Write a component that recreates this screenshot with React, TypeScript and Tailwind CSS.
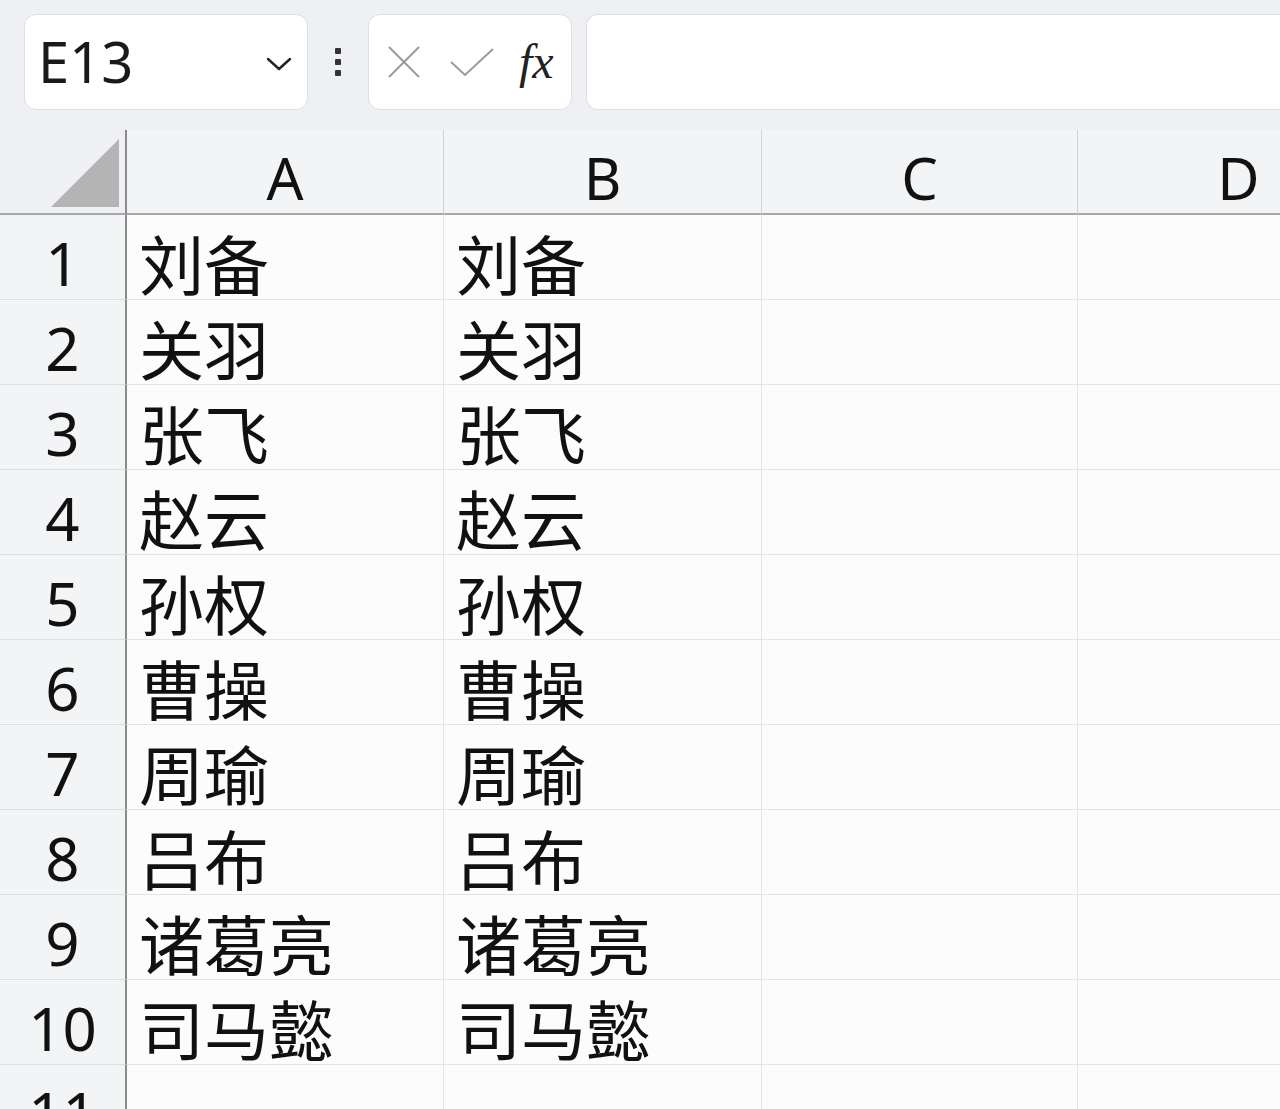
import React from 'react';

const names = ['刘备', '关羽', '张飞', '赵云', '孙权', '曹操', '周瑜', '吕布', '诸葛亮', '司马懿'];
const cols = ['A', 'B', 'C', 'D'];

const cjk = { fontFamily: '"Noto Sans CJK SC", "Noto Sans", sans-serif' };
const latin = { fontFamily: '"Noto Sans", "Open Sans", sans-serif' };

function FormulaBar() {
    return (
        <div className="flex h-[130px] items-start bg-[#eef0f3] pt-[14px] pl-[24px]">
            <div className="flex h-[96px] w-[284px] items-center justify-between rounded-[12px] border border-[#dcdfe3] bg-white pl-[13px] pr-[14px]">
                <span className="text-[56px] leading-[1.1] text-[#1a1a1a]" style={latin}>E13</span>
                <svg width="28" height="16" viewBox="0 0 28 16" className="mt-[4px]">
                    <path d="M3 3 L14 13 L25 3" fill="none" stroke="#222" strokeWidth="2.4" strokeLinecap="round" strokeLinejoin="round" />
                </svg>
            </div>
            <div className="flex h-[96px] w-[60px] flex-col items-center justify-center gap-[5px]">
                <span className="h-[6px] w-[6px] rounded-[1px] bg-[#333]" />
                <span className="h-[6px] w-[6px] rounded-[1px] bg-[#333]" />
                <span className="h-[6px] w-[6px] rounded-[1px] bg-[#333]" />
            </div>
            <div className="flex h-[96px] w-[204px] items-center rounded-[12px] border border-[#dcdfe3] bg-white pl-[18px]">
                <svg width="34" height="34" viewBox="0 0 34 34">
                    <path d="M2 2 L32 32 M32 2 L2 32" stroke="#9a9a9a" strokeWidth="2" />
                </svg>
                <svg width="46" height="30" viewBox="0 0 46 30" className="ml-[28px]">
                    <path d="M2 15 L16 28 L44 2" fill="none" stroke="#9a9a9a" strokeWidth="2" />
                </svg>
                <span
                    className="ml-[24px] text-[48px] italic leading-[1.1] text-[#222]"
                    style={{ fontFamily: '"Liberation Serif", "DejaVu Serif", serif' }}
                >
                    fx
                </span>
            </div>
            <div className="ml-[14px] h-[96px] flex-1 rounded-l-[12px] border border-r-0 border-[#dcdfe3] bg-white" />
        </div>
    );
}

export default function App() {
    return (
        <div className="h-[1109px] w-[1280px] overflow-hidden bg-white">
            <FormulaBar />
            <div className="grid w-[1400px] grid-cols-[127px_317px_318px_316px_322px] auto-rows-[85px]">
                {/* corner */}
                <div className="flex items-end justify-end border-r-2 border-b-2 border-r-[#8a8a8a] border-b-[#a8a8a8] bg-[#eef0f3] pr-[6px] pb-[6px]">
                    <div className="h-[68px] w-[68px] bg-[#b4b4b4] [clip-path:polygon(100%_0,100%_100%,0_100%)]" />
                </div>
                {cols.map((c) => (
                    <div
                        key={c}
                        className="flex items-end justify-center border-r border-b-2 border-r-[#d0d2d5] border-b-[#a8a8a8] bg-[#f3f4f6] pb-[3px]"
                    >
                        <span className="text-[58px] leading-[1.1] text-[#111]" style={latin}>{c}</span>
                    </div>
                ))}
                {Array.from({ length: 11 }).map((_, i) => (
                    <React.Fragment key={i}>
                        <div className="flex items-end justify-center border-r-2 border-b border-r-[#8a8a8a] border-b-[#dcdee1] bg-[#f3f4f6] pb-[3px]">
                            <span className="text-[60px] leading-[1.1] text-[#111]" style={latin}>{i + 1}</span>
                        </div>
                        {cols.map((c, j) => (
                            <div
                                key={c}
                                className="flex items-end border-r border-b border-[#e2e4e7] bg-[#fcfcfd] pl-[12px] pb-[1px]"
                            >
                                {j < 2 && names[i] && (
                                    <span className="text-[65px] leading-[1.1] text-[#111]" style={cjk}>{names[i]}</span>
                                )}
                            </div>
                        ))}
                    </React.Fragment>
                ))}
            </div>
        </div>
    );
}
